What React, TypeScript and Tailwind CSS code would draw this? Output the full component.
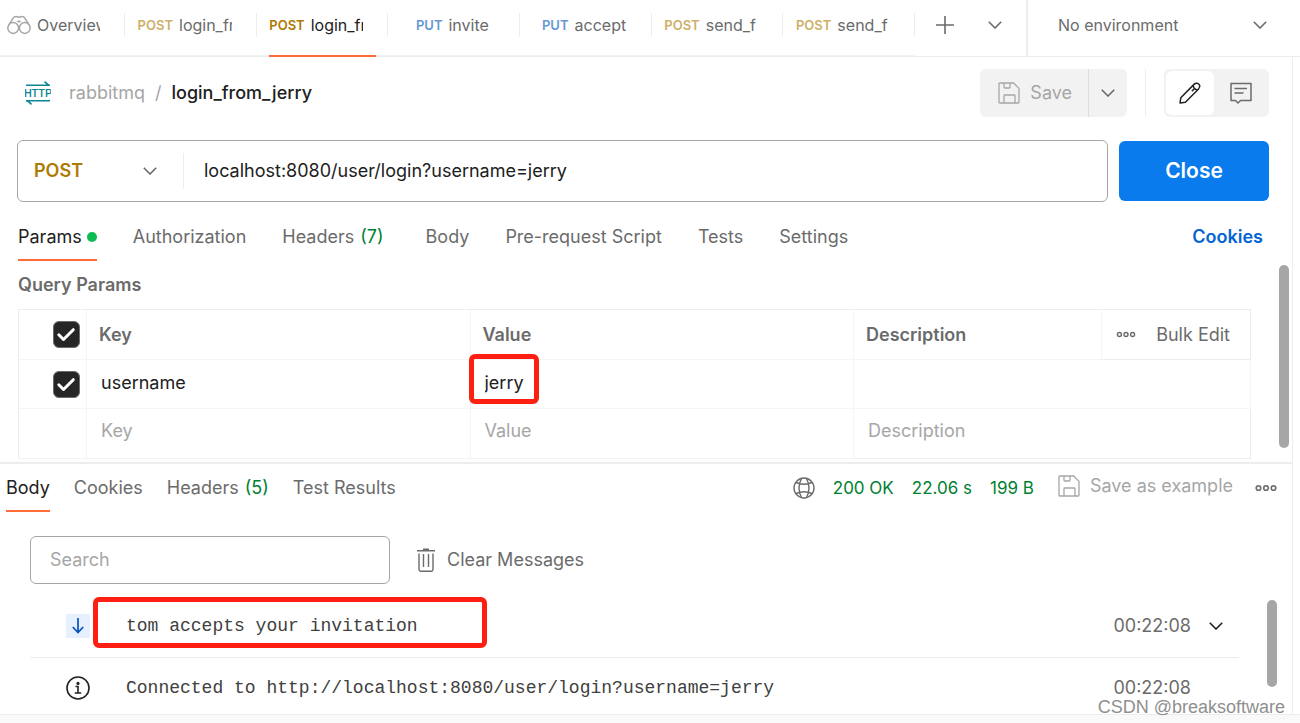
import { useState } from "react";
import type { ReactNode } from "react";
import clsx from "clsx";

type RequestTab = { method: "POST" | "PUT"; name: string; active?: boolean };

const requestTabs: RequestTab[] = [
  { method: "POST", name: "login_fr" },
  { method: "POST", name: "login_fr", active: true },
  { method: "PUT", name: "invite" },
  { method: "PUT", name: "accept" },
  { method: "POST", name: "send_f" },
  { method: "POST", name: "send_f" },
];

function ChevronDown({ className }: { className?: string }) {
  return (
    <svg className={clsx("h-2 w-3.5 shrink-0", className)} viewBox="0 0 14 8" fill="none" stroke="currentColor" strokeWidth="1.6" aria-hidden>
      <path d="M0.8 0.8 7 7l6.2-6.2" />
    </svg>
  );
}

function BinocularsIcon() {
  return (
    <svg className="h-5 w-6 shrink-0 text-[#a6a6a6]" viewBox="0 0 24 20" fill="none" stroke="currentColor" strokeWidth="1.5" aria-hidden>
      <circle cx="6.2" cy="13" r="5.4" />
      <circle cx="17.8" cy="13" r="5.4" />
      <path d="M1.8 9.8 6 3.4Q7.6 1 10 1.8q2 .8 4 0 2.400-.8 4 1.600l4.200 6.400" />
      <path d="M11 6.600q1-1.400 2 0zM11.200 11.200h1.600" />
    </svg>
  );
}

function HttpIcon() {
  return (
    <svg className="h-6 w-[26px] shrink-0 text-[#0d8694]" viewBox="0 0 26 24" fill="none" stroke="currentColor" strokeWidth="1.6" aria-hidden>
      <path d="M1 4.200h24M19.500.6l4 3.600M25 19.800H1M6.500 23.400l-4-3.600" />
      <text x="13" y="16" textAnchor="middle" fill="currentColor" stroke="none" className="font-['Roboto',sans-serif] text-[11px] font-medium">
        HTTP
      </text>
    </svg>
  );
}

function SaveIcon() {
  return (
    <svg className="h-[22px] w-[22px] shrink-0" viewBox="0 0 22 22" fill="none" stroke="currentColor" strokeWidth="1.3" aria-hidden>
      <path d="M2 1h13.600L21 6.400V20.200q0 .8-.8.8H1.800Q1 21 1 20.200V1.800Q1 1 2 1Z" />
      <path d="M6 1v4.200q0 .8.8.8h4.400q.8 0 .8-.8V1M6 21v-7.200q0-.8.8-.8h9.400q.8 0 .8.800V21" />
    </svg>
  );
}

function PencilIcon() {
  return (
    <svg className="h-[22px] w-[22px]" viewBox="0 0 22 22" fill="none" stroke="currentColor" strokeWidth="1.5" strokeLinejoin="round" aria-hidden>
      <path d="M1 21l.8-5.200L15 2.400q1.500-1.500 3.200-1.200 1.800.4 2.500 2.300.4 1.900-1.200 3.500L6.400 20.200Z" />
      <path d="M14.200 3.200q.2 4 4.400 4.700M12.800 9.200l3-3" />
    </svg>
  );
}

function CommentIcon() {
  return (
    <svg className="h-[22px] w-[22px]" viewBox="0 0 22 22" fill="none" stroke="currentColor" strokeWidth="1.5" strokeLinejoin="round" aria-hidden>
      <path d="M1 1.500h20v17H10.500L8 21l-2.500-2.500H1Z" />
      <path d="M4.500 6.500h12.500M4.500 11h9" />
    </svg>
  );
}

function GlobeIcon() {
  return (
    <svg className="h-[22px] w-[22px]" viewBox="0 0 22 22" fill="none" stroke="currentColor" strokeWidth="1.4" aria-hidden>
      <circle cx="11" cy="11" r="10" />
      <path d="M8.500 1.500q-5 9.500 0 19M13.500 1.500q5 9.500 0 19M3 5.500q8 3.500 16 0M3 16.500q8-3.500 16 0" />
    </svg>
  );
}

function TrashIcon() {
  return (
    <svg className="h-6 w-5" viewBox="0 0 20 24" fill="none" stroke="currentColor" strokeWidth="1.400" aria-hidden>
      <path d="M1 2.700h18M3 5.500v16q0 1.700 1.700 1.700h10.600q1.700 0 1.700-1.700v-16M7.500 6v13M12.500 6v13" />
      <path d="M7 1.500h6" strokeWidth="2" />
    </svg>
  );
}

function MoreIcon({ className }: { className?: string }) {
  return (
    <svg className={className} viewBox="0 0 22 8" fill="none" stroke="currentColor" strokeWidth="1.600" aria-hidden>
      <circle cx="3.500" cy="4" r="2.300" />
      <circle cx="11" cy="4" r="2.300" />
      <circle cx="18.500" cy="4" r="2.300" />
    </svg>
  );
}

function ArrowDownIcon() {
  return (
    <svg className="h-4 w-3" viewBox="0 0 12 16" fill="none" stroke="currentColor" strokeWidth="1.700" aria-hidden>
      <path d="M6 0v14.500M.800 9 6 14.500 11.200 9" />
    </svg>
  );
}

function InfoIcon() {
  return (
    <svg className="h-6 w-6" viewBox="0 0 24 24" fill="none" stroke="currentColor" strokeWidth="1.600" aria-hidden>
      <circle cx="12" cy="12" r="11" />
      <path d="M9.500 10.500H12V17M8.800 17h6.400" />
      <circle cx="12" cy="7.400" r=".8" fill="currentColor" />
    </svg>
  );
}

function Checkbox({ label }: { label: string }) {
  const [checked, setChecked] = useState(true);
  return (
    <label className="relative ml-auto mr-1.5 block h-[27px] w-[27px]">
      <input
        type="checkbox"
        aria-label={label}
        checked={checked}
        onChange={(e) => setChecked(e.target.checked)}
        className="block h-full w-full appearance-none rounded-md border border-[#6b6b6b] checked:bg-[#262626]"
      />
      {checked ? (
        <svg className="pointer-events-none absolute inset-0 text-white" viewBox="0 0 27 27" fill="none" stroke="currentColor" strokeWidth="3" strokeLinecap="round" strokeLinejoin="round" aria-hidden>
          <path d="M5.800 13.800l4.700 4.700L20.300 8.700" />
        </svg>
      ) : null}
    </label>
  );
}

function SectionTab({ active, children }: { active?: boolean; children: ReactNode }) {
  return (
    <button
      type="button"
      className={clsx(
        "flex h-12 items-center gap-1.5 whitespace-nowrap border-y-2 border-t-transparent",
        active ? "border-b-[#ff6c37] text-[#212121]" : "border-b-transparent",
      )}
    >
      {children}
    </button>
  );
}

function TopBar() {
  return (
    <header className="flex h-[57px] border-b border-[#ededed] text-base/6">
      <nav className="flex min-w-0 shrink-0 basis-[915px] border-b border-[#f2f2f2]">
        <button type="button" className="flex w-[125px] shrink-0 items-center pb-1.5">
          <span className="flex h-6 w-full items-center gap-1.5 border-r border-[#ededed] pl-[7px]">
            <BinocularsIcon />
            <span className="w-[63px] overflow-hidden text-left">Overview</span>
          </span>
        </button>
        {requestTabs.map((tab, i) => (
          <button key={i} type="button" className="relative flex min-w-0 flex-1 items-center pb-1.5">
            <span className="flex h-6 w-full items-center border-r border-[#ededed] pl-3 pr-6">
              <span className={clsx("flex w-full items-center gap-1.5 overflow-hidden", tab.method === "PUT" && "justify-center")}>
                <span
                  className={clsx(
                    "w-9 shrink-0 text-right text-[13px]/6 font-semibold",
                    tab.method === "PUT" ? "text-[#6698d4]" : tab.active ? "text-[#ad7a03]" : "text-[#ceaf68]",
                  )}
                >
                  {tab.method}
                </span>
                <span className={clsx("overflow-hidden whitespace-nowrap", tab.active && "text-[#212121]")}>{tab.name}</span>
              </span>
            </span>
            {tab.active ? <span className="absolute -bottom-0.5 left-3 right-3 h-0.5 bg-[#ff6c37]" /> : null}
          </button>
        ))}
      </nav>
      <div className="flex w-[113px] shrink-0 items-center justify-between border-r-2 border-[#ededed] pb-1.5 pl-5 pr-6">
        <button type="button" aria-label="New tab">
          <svg className="h-5 w-5" viewBox="0 0 20 20" stroke="currentColor" strokeWidth="1.600" aria-hidden>
            <path d="M10 1v18M1 10h18" />
          </svg>
        </button>
        <button type="button" aria-label="Search tabs">
          <ChevronDown />
        </button>
      </div>
      <div className="relative flex min-w-0 flex-1 items-center pb-1.5">
        <select aria-label="Environment" className="w-full appearance-none bg-transparent pl-[30px] outline-none">
          <option>No environment</option>
        </select>
        <ChevronDown className="pointer-events-none absolute right-[33px]" />
      </div>
    </header>
  );
}

function TitleRow() {
  return (
    <div className="flex h-12 items-center pl-[25px] pr-[23px]">
      <HttpIcon />
      <div className="ml-[18px] flex gap-2.5">
        <span className="text-[#a6a6a6]">rabbitmq</span>
        <span className="text-[#a6a6a6]">/</span>
        <h1 className="font-medium text-[#212121]">login_from_jerry</h1>
      </div>
      <div className="ml-auto flex h-full overflow-hidden rounded-md bg-[#f2f2f2]">
        <button type="button" className="flex items-center gap-2.5 border-r border-[#dedede] pl-[18px] pr-4 text-[#a6a6a6]">
          <SaveIcon />
          Save
        </button>
        <button type="button" aria-label="More save options" className="px-3">
          <ChevronDown />
        </button>
      </div>
      <div className="mx-[18px] h-full border-l border-[#ededed]" />
      <div className="flex h-full rounded-md bg-[#f2f2f2] p-0.5">
        <button type="button" aria-label="Build" className="flex w-12 items-center justify-center rounded-md bg-white text-[#212121]">
          <PencilIcon />
        </button>
        <button type="button" aria-label="Comments" className="flex w-[53px] items-center justify-center">
          <CommentIcon />
        </button>
      </div>
    </div>
  );
}

function UrlBar() {
  const [url, setUrl] = useState("localhost:8080/user/login?username=jerry");
  return (
    <div className="mt-[23px] flex items-center gap-[11px] pl-[17px] pr-[23px]">
      <div className="flex h-[62px] min-w-0 flex-1 items-center rounded-md border border-[#a6a6a6]">
        <div className="relative flex h-9 w-[166px] shrink-0 items-center border-r border-[#ededed]">
          <select aria-label="Method" className="w-full appearance-none bg-transparent pl-4 font-semibold text-[#ad7a03] outline-none">
            <option>POST</option>
            <option>PUT</option>
          </select>
          <ChevronDown className="pointer-events-none absolute right-[26px]" />
        </div>
        <input
          aria-label="Request URL"
          value={url}
          onChange={(e) => setUrl(e.target.value)}
          className="min-w-0 flex-1 px-5 text-[#212121] outline-none"
        />
      </div>
      <button type="button" className="h-[60px] w-[150px] rounded-md bg-[#097bed] text-[21px]/6 font-semibold text-white">
        Close
      </button>
    </div>
  );
}

function ParamsTable() {
  const cell = "border-b border-r border-[#f5f5f5]";
  const field = "block w-full bg-transparent pl-3.5 pb-0.5 text-[#212121] outline-none placeholder:text-[#a6a6a6]";
  return (
    <table className="w-full table-fixed border-separate border-spacing-0 border-l border-t border-[#ededed] text-left">
      <colgroup>
        <col className="w-[68px]" />
        <col />
        <col />
        <col className="w-[248px]" />
        <col className="w-[149px]" />
      </colgroup>
      <thead>
        <tr className="h-[50px]">
          <th className={cell}>
            <Checkbox label="Select all" />
          </th>
          <th className={clsx(cell, "pl-3 font-semibold")}>Key</th>
          <th className={clsx(cell, "pl-3 font-semibold")}>Value</th>
          <th className={clsx(cell, "pl-3 font-semibold")}>Description</th>
          <th className="border-b border-r border-[#ededed] font-normal">
            <div className="flex items-center justify-between pl-3.5 pr-5">
              <button type="button" aria-label="Column options">
                <MoreIcon className="h-[7px] w-5" />
              </button>
              <button type="button">Bulk Edit</button>
            </div>
          </th>
        </tr>
      </thead>
      <tbody>
        <tr className="h-[49px]">
          <td className={cell}>
            <Checkbox label="Use username" />
          </td>
          <td className={cell}>
            <input aria-label="Key" defaultValue="username" className={field} />
          </td>
          <td className={clsx(cell, "relative")}>
            <input aria-label="Value" defaultValue="jerry" className={field} />
            <span className="pointer-events-none absolute -left-0.5 -top-1.5 h-[50px] w-[70px] rounded-md border-[5px] border-[#ff1e12]" />
          </td>
          <td colSpan={2} className={cell}>
            <input aria-label="Description" className={field} />
          </td>
        </tr>
        <tr className="h-[50px]">
          <td className={clsx(cell, "pb-1")} />
          <td className={clsx(cell, "pb-1")}>
            <input aria-label="New key" placeholder="Key" className={field} />
          </td>
          <td className={clsx(cell, "pb-1")}>
            <input aria-label="New value" placeholder="Value" className={field} />
          </td>
          <td colSpan={2} className="border-b border-r border-[#ededed] pb-1">
            <input aria-label="New description" placeholder="Description" className={field} />
          </td>
        </tr>
      </tbody>
    </table>
  );
}

function RequestPanel() {
  return (
    <section className="border-b-2 border-[#ededed] pb-[3px]">
      <div className="mt-[11px] flex items-center justify-between pl-[18px] pr-[29px]">
        <div className="flex gap-9">
          <SectionTab active>
            Params
            <span className="-ml-px h-2.5 w-2.5 rounded-full bg-[#0cbb52]" />
          </SectionTab>
          <SectionTab>Authorization</SectionTab>
          <SectionTab>
            Headers <span className="mr-1.5 text-[#007f31]">(7)</span>
          </SectionTab>
          <SectionTab>Body</SectionTab>
          <SectionTab>Pre-request Script</SectionTab>
          <SectionTab>Tests</SectionTab>
          <SectionTab>Settings</SectionTab>
        </div>
        <a href="#cookies" className="font-semibold text-[#0265d2]">
          Cookies
        </a>
      </div>
      <div className="flex items-start justify-between pl-[18px] pr-[3px]">
        <div className="mr-7 flex-1">
          <h2 className="flex h-12 items-center font-semibold">Query Params</h2>
          <ParamsTable />
        </div>
        <div className="mt-1 h-[183px] w-2.5 rounded-full bg-[#a6a6a6]" />
      </div>
    </section>
  );
}

function ResponseBar() {
  return (
    <div className="flex items-center justify-between pl-1.5 pr-[15px]">
      <div className="flex gap-6">
        <SectionTab active>Body</SectionTab>
        <SectionTab>Cookies</SectionTab>
        <SectionTab>
          Headers <span className="text-[#007f31]">(5)</span>
        </SectionTab>
        <SectionTab>Test Results</SectionTab>
      </div>
      <div className="flex items-center gap-[18px] whitespace-nowrap text-[#007f31]">
        <span className="text-[#6b6b6b]">
          <GlobeIcon />
        </span>
        <span className="text-[17px]/6">200 OK</span>
        <span className="text-[17px]/6">22.06 s</span>
        <span className="text-[17px]/6">199 B</span>
        <button type="button" className="ml-1.5 flex items-center gap-2.5 pb-1 text-[#a6a6a6]">
          <SaveIcon />
          Save as example
        </button>
        <button type="button" aria-label="More actions" className="ml-1 text-[#6b6b6b]">
          <MoreIcon className="h-2 w-[22px]" />
        </button>
      </div>
    </div>
  );
}

function Messages() {
  const text = "ml-9 font-['Liberation_Mono',monospace] text-[#404040]";
  return (
    <section className="pl-[30px] pr-[15px]">
      <div className="mt-6 flex items-center gap-[26px]">
        <input
          type="search"
          aria-label="Search messages"
          placeholder="Search"
          className="h-12 w-[360px] rounded-md border border-[#a6a6a6] px-[19px] pb-0.5 outline-none placeholder:text-[#a6a6a6]"
        />
        <button type="button" className="flex items-center gap-[11px]">
          <TrashIcon />
          Clear Messages
        </button>
      </div>
      <div className="mt-2.5 flex items-start gap-7">
        <ul className="min-w-0 flex-1">
          <li className="relative flex h-16 items-center border-b border-[#ededed] pl-9 pr-4">
            <span className="flex h-6 w-6 items-center justify-center bg-[#e6f0ff] text-[#0053b8]">
              <ArrowDownIcon />
            </span>
            <span className={text}>tom accepts your invitation</span>
            <span className="pointer-events-none absolute left-[63px] top-[3px] h-[51px] w-[394px] rounded-md border-[5px] border-[#ff1e12]" />
            <time className="ml-auto">00:22:08</time>
            <button type="button" aria-label="Expand message" className="ml-[18px] text-[#212121]">
              <ChevronDown />
            </button>
          </li>
          <li className="flex h-14 items-center pl-9 pr-12 pt-1">
            <span className="text-[#212121]">
              <InfoIcon />
            </span>
            <span className={text}>Connected to http://localhost:8080/user/login?username=jerry</span>
            <time className="ml-auto">00:22:08</time>
          </li>
        </ul>
        <div className="mt-1.5 h-[87px] w-2.5 rounded-full bg-[#a6a6a6]" />
      </div>
    </section>
  );
}

export default function App() {
  return (
    <div className="relative flex min-h-screen flex-col bg-white font-['Inter',sans-serif] text-lg/6 text-[#6b6b6b]">
      <TopBar />
      <main className="mr-[7px] border-r border-[#ededed] pt-3">
        <TitleRow />
        <UrlBar />
        <RequestPanel />
        <ResponseBar />
        <Messages />
      </main>
      <footer className="flex-1 border-t border-[#ededed] bg-[#f9f9f9]" />
      <p className="pointer-events-none absolute bottom-1 right-[15px] font-['Liberation_Sans',sans-serif] text-[#8f8f8f]">CSDN @breaksoftware</p>
    </div>
  );
}
